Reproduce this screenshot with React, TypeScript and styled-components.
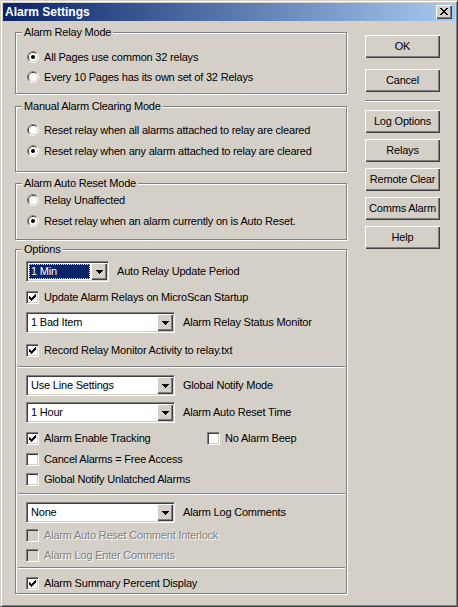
import React from 'react';
import styled, { createGlobalStyle } from 'styled-components';

const FACE = '#d4d0c8';
const SHADOW = '#808080';
const DARK = '#404040';

const GlobalStyle = createGlobalStyle`
  html, body {
    margin: 0;
    padding: 0;
    background: ${FACE};
  }
  body {
    font-family: "Liberation Sans", Arial, sans-serif;
    font-size: 11px;
    letter-spacing: -0.2px;
    color: #000;
  }
`;

const Window = styled.div`
  width: 458px;
  height: 607px;
  box-sizing: border-box;
  background: ${FACE};
  border: 1px solid;
  border-color: ${FACE} ${DARK} ${DARK} ${FACE};
  box-shadow: inset 1px 1px 0 #fff, inset -1px -1px 0 ${SHADOW};
  padding: 2px;
  display: flex;
  flex-direction: column;
`;

const TitleBar = styled.div`
  height: 18px;
  flex: none;
  display: flex;
  align-items: center;
  justify-content: space-between;
  padding-left: 2px;
  background: linear-gradient(to right, #0a246a, #a6caf0);
`;

const TitleText = styled.span`
  color: #fff;
  font-weight: bold;
  font-size: 12px;
  letter-spacing: 0;
`;

const CloseButton = styled.div`
  width: 16px;
  height: 14px;
  margin-right: 3px;
  box-sizing: border-box;
  background: ${FACE};
  box-shadow: inset 1px 1px 0 #fff, inset -1px -1px 0 ${DARK}, inset -2px -2px 0 ${SHADOW};
  display: flex;
  align-items: center;
  justify-content: center;
  padding-bottom: 1px;
`;

const Body = styled.div`
  flex: 1;
  display: flex;
  padding: 11px 0 0 12px;
`;

const LeftCol = styled.div`
  width: 332px;
  display: flex;
  flex-direction: column;
`;

const RightCol = styled.div`
  width: 75px;
  margin: 3px 0 0 18px;
  display: flex;
  flex-direction: column;
`;

const Group = styled.div<{ $h: number; $mt: number }>`
  position: relative;
  box-sizing: border-box;
  height: ${({ $h }) => $h}px;
  margin-top: ${({ $mt }) => $mt}px;
  border: 1px solid ${SHADOW};
  box-shadow: 1px 1px 0 #fff, inset 1px 1px 0 #fff;
`;

const GroupLabel = styled.span`
  position: absolute;
  top: -7px;
  left: 6px;
  padding: 0 2px;
  line-height: 13px;
  background: ${FACE};
`;

const RadioBody = styled.div<{ $pt: number; $gap: number }>`
  display: flex;
  flex-direction: column;
  gap: ${({ $gap }) => $gap}px;
  padding: ${({ $pt }) => $pt}px 0 0 11px;
`;

const RadioRow = styled.label`
  height: 20px;
  display: flex;
  align-items: center;
  gap: 5px;
  line-height: 13px;
  svg {
    display: block;
  }
`;

const OptBody = styled.div`
  display: flex;
  flex-direction: column;
  padding-left: 10px;
`;

const OptRow = styled.div<{ $mt: number }>`
  margin-top: ${({ $mt }) => $mt}px;
  display: flex;
  align-items: center;
  min-height: 20px;
`;

const FieldLabel = styled.span`
  margin-left: 8px;
  line-height: 13px;
`;

const Separator = styled.div<{ $mt: number }>`
  margin-top: ${({ $mt }) => $mt}px;
  height: 0;
  border-top: 1px solid ${SHADOW};
  border-bottom: 1px solid #fff;
  flex: none;
`;

const OptSeparator = styled(Separator)`
  width: 327px;
  margin-left: -8px;
`;

const CheckRow = styled.label<{ $w?: number; $disabled?: boolean }>`
  display: flex;
  align-items: center;
  gap: 5px;
  height: 20px;
  width: ${({ $w }) => ($w ? `${$w}px` : 'auto')};
  flex: none;
  line-height: 13px;
  color: ${({ $disabled }) => ($disabled ? SHADOW : '#000')};
  text-shadow: ${({ $disabled }) => ($disabled ? '1px 1px 0 #fff' : 'none')};
`;

const CheckBox = styled.span<{ $disabled?: boolean }>`
  width: 13px;
  height: 13px;
  box-sizing: border-box;
  flex: none;
  border: 1px solid;
  border-color: ${SHADOW} #fff #fff ${SHADOW};
  box-shadow: inset 1px 1px 0 ${DARK}, inset -1px -1px 0 ${FACE};
  background: ${({ $disabled }) => ($disabled ? FACE : '#fff')};
  svg {
    display: block;
  }
`;

const ComboBox = styled.div<{ $w: number }>`
  width: ${({ $w }) => $w}px;
  height: 21px;
  box-sizing: border-box;
  flex: none;
  display: flex;
  border: 1px solid;
  border-color: ${SHADOW} #fff #fff ${SHADOW};
  box-shadow: inset 1px 1px 0 ${DARK}, inset -1px -1px 0 ${FACE};
  background: #fff;
  padding: 1px;
`;

const ComboField = styled.div`
  flex: 1;
  display: flex;
  padding: 1px;
`;

const ComboText = styled.span<{ $focused?: boolean }>`
  flex: 1;
  line-height: 15px;
  padding-left: 2px;
  box-sizing: border-box;
  background: ${({ $focused }) => ($focused ? '#0a246a' : 'transparent')};
  color: ${({ $focused }) => ($focused ? '#fff' : '#000')};
  outline: ${({ $focused }) => ($focused ? '1px dotted #e8e0a0' : 'none')};
  outline-offset: -1px;
`;

const ComboArrow = styled.div`
  width: 16px;
  height: 17px;
  box-sizing: border-box;
  flex: none;
  background: ${FACE};
  box-shadow: inset 1px 1px 0 #fff, inset -1px -1px 0 ${DARK}, inset -2px -2px 0 ${SHADOW};
  display: flex;
  align-items: center;
  justify-content: center;
  svg {
    display: block;
  }
`;

const Button = styled.div<{ $mt: number }>`
  height: 23px;
  margin-top: ${({ $mt }) => $mt}px;
  box-sizing: border-box;
  background: ${FACE};
  box-shadow: inset 1px 1px 0 #fff, inset -1px -1px 0 ${DARK}, inset -2px -2px 0 ${SHADOW};
  display: flex;
  align-items: center;
  justify-content: center;
  padding-bottom: 1px;
`;

type Run = [number, number, number];

const Pixels: React.FC<{ w: number; h: number; runs: Run[]; color?: string }> = ({ w, h, runs, color = '#000' }) => (
  <svg width={w} height={h} viewBox={`0 0 ${w} ${h}`} shapeRendering="crispEdges">
    <path fill={color} d={runs.map(([x, y, l]) => `M${x} ${y}h${l}v1h-${l}z`).join('')} />
  </svg>
);

const closeRuns: Run[] = [
  [0, 0, 2], [6, 0, 2],
  [1, 1, 2], [5, 1, 2],
  [2, 2, 4],
  [3, 3, 2],
  [2, 4, 4],
  [1, 5, 2], [5, 5, 2],
  [0, 6, 2], [6, 6, 2],
];

const checkRuns: Run[] = [
  [8, 2, 1],
  [7, 3, 2],
  [2, 4, 1], [6, 4, 3],
  [2, 5, 2], [5, 5, 3],
  [2, 6, 5],
  [3, 7, 3],
  [4, 8, 1],
];

const arrowRuns: Run[] = [
  [0, 0, 7],
  [1, 1, 5],
  [2, 2, 3],
  [3, 3, 1],
];

const RadioIcon: React.FC<{ checked?: boolean }> = ({ checked }) => (
  <svg width="12" height="12" viewBox="0 0 12 12">
    <path d="M2.11 9.89 A5.5 5.5 0 0 1 9.89 2.11" fill="none" stroke={SHADOW} />
    <path d="M9.89 2.11 A5.5 5.5 0 0 1 2.11 9.89" fill="none" stroke="#fff" />
    <path d="M2.82 9.18 A4.5 4.5 0 0 1 9.18 2.82" fill="none" stroke={DARK} />
    <path d="M9.18 2.82 A4.5 4.5 0 0 1 2.82 9.18" fill="none" stroke={FACE} />
    <circle cx="6" cy="6" r="4" fill="#fff" />
    {checked && <circle cx="6" cy="6" r="2" fill="#000" />}
  </svg>
);

const Radio: React.FC<{ checked?: boolean; label: string }> = ({ checked, label }) => (
  <RadioRow>
    <RadioIcon checked={checked} />
    <span>{label}</span>
  </RadioRow>
);

const Check: React.FC<{ checked?: boolean; disabled?: boolean; label: string; w?: number }> = ({ checked, disabled, label, w }) => (
  <CheckRow $w={w} $disabled={disabled}>
    <CheckBox $disabled={disabled}>
      {checked && <Pixels w={11} h={11} runs={checkRuns} />}
    </CheckBox>
    <span>{label}</span>
  </CheckRow>
);

const Combo: React.FC<{ value: string; w: number; focused?: boolean }> = ({ value, w, focused }) => (
  <ComboBox $w={w}>
    <ComboField>
      <ComboText $focused={focused}>{value}</ComboText>
    </ComboField>
    <ComboArrow>
      <Pixels w={7} h={4} runs={arrowRuns} />
    </ComboArrow>
  </ComboBox>
);

export default function App() {
  return (
    <Window>
      <GlobalStyle />
      <TitleBar>
        <TitleText>Alarm Settings</TitleText>
        <CloseButton>
          <Pixels w={8} h={7} runs={closeRuns} />
        </CloseButton>
      </TitleBar>
      <Body>
        <LeftCol>
          <Group $h={62} $mt={0}>
            <GroupLabel>Alarm Relay Mode</GroupLabel>
            <RadioBody $pt={14} $gap={0}>
              <Radio checked label="All Pages use common 32 relays" />
              <Radio label="Every 10 Pages has its own set of 32 Relays" />
            </RadioBody>
          </Group>
          <Group $h={66} $mt={12}>
            <GroupLabel>Manual Alarm Clearing Mode</GroupLabel>
            <RadioBody $pt={13} $gap={1}>
              <Radio label="Reset relay when all alarms attached to relay are cleared" />
              <Radio checked label="Reset relay when any alarm attached to relay are cleared" />
            </RadioBody>
          </Group>
          <Group $h={57} $mt={11}>
            <GroupLabel>Alarm Auto Reset Mode</GroupLabel>
            <RadioBody $pt={6} $gap={1}>
              <Radio label="Relay Unaffected" />
              <Radio checked label="Reset relay when an alarm currently on is Auto Reset." />
            </RadioBody>
          </Group>
          <Group $h={345} $mt={9}>
            <GroupLabel>Options</GroupLabel>
            <OptBody>
              <OptRow $mt={11}>
                <Combo w={83} value="1 Min" focused />
                <FieldLabel>Auto Relay Update Period</FieldLabel>
              </OptRow>
              <OptRow $mt={5}>
                <Check checked label="Update Alarm Relays on MicroScan Startup" />
              </OptRow>
              <OptRow $mt={5}>
                <Combo w={149} value="1 Bad Item" />
                <FieldLabel>Alarm Relay Status Monitor</FieldLabel>
              </OptRow>
              <OptRow $mt={7}>
                <Check checked label="Record Relay Monitor Activity to relay.txt" />
              </OptRow>
              <OptSeparator $mt={6} />
              <OptRow $mt={7}>
                <Combo w={149} value="Use Line Settings" />
                <FieldLabel>Global Notify Mode</FieldLabel>
              </OptRow>
              <OptRow $mt={6}>
                <Combo w={149} value="1 Hour" />
                <FieldLabel>Alarm Auto Reset Time</FieldLabel>
              </OptRow>
              <OptRow $mt={5}>
                <Check checked w={181} label="Alarm Enable Tracking" />
                <Check label="No Alarm Beep" />
              </OptRow>
              <OptRow $mt={1}>
                <Check label="Cancel Alarms = Free Access" />
              </OptRow>
              <OptRow $mt={0}>
                <Check label="Global Notify Unlatched Alarms" />
              </OptRow>
              <OptSeparator $mt={4} />
              <OptRow $mt={7}>
                <Combo w={149} value="None" />
                <FieldLabel>Alarm Log Comments</FieldLabel>
              </OptRow>
              <OptRow $mt={2}>
                <Check disabled label="Alarm Auto Reset Comment Interlock" />
              </OptRow>
              <OptRow $mt={0}>
                <Check disabled label="Alarm Log Enter Comments" />
              </OptRow>
              <OptSeparator $mt={2} />
              <OptRow $mt={4}>
                <Check checked label="Alarm Summary Percent Display" />
              </OptRow>
            </OptBody>
          </Group>
        </LeftCol>
        <RightCol>
          <Button $mt={0}>OK</Button>
          <Button $mt={11}>Cancel</Button>
          <Separator $mt={8} />
          <Button $mt={8}>Log Options</Button>
          <Button $mt={6}>Relays</Button>
          <Button $mt={6}>Remote Clear</Button>
          <Button $mt={6}>Comms Alarm</Button>
          <Button $mt={6}>Help</Button>
        </RightCol>
      </Body>
    </Window>
  );
}
